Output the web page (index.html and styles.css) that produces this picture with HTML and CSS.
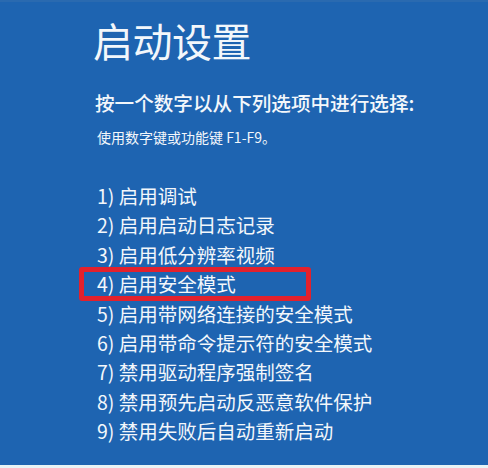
FILE: index.html
```html
<!DOCTYPE html>
<html lang="zh-CN">
<head>
<meta charset="utf-8">
<link rel="stylesheet" href="styles.css">
</head>
<body>
<div class="screen">
  <h1 class="title">启动设置</h1>
  <p class="lead">按一个数字以从下列选项中进行选择:</p>
  <p class="hint">使用数字键或功能键 F1-F9。</p>
  <ol class="options">
    <li>1) 启用调试</li>
    <li>2) 启用启动日志记录</li>
    <li>3) 启用低分辨率视频</li>
    <li class="selected">4) 启用安全模式<span class="mark"></span></li>
    <li>5) 启用带网络连接的安全模式</li>
    <li>6) 启用带命令提示符的安全模式</li>
    <li>7) 禁用驱动程序强制签名</li>
    <li>8) 禁用预先启动反恶意软件保护</li>
    <li>9) 禁用失败后自动重新启动</li>
  </ol>
</div>
</body>
</html>
```
FILE: styles.css
```css
html, body {
  margin: 0;
  padding: 0;
  background: #e8f4f6;
}
.screen {
  width: 488px;
  height: 465px;
  box-sizing: border-box;
  background: #1e64b1;
  border-top: 2px solid #2a6ab0;
  padding: 14px 0 0 93px;
  color: #f3f7fb;
  font-family: "Noto Sans CJK SC", "Noto Sans", sans-serif;
  overflow: hidden;
}
.title {
  margin: 0;
  font-size: 40px;
  line-height: 48px;
  font-weight: 400;
  letter-spacing: -0.5px;
}
.lead {
  margin: 26px 0 0 2px;
  font-size: 19.6px;
  line-height: 26px;
  font-weight: 500;
}
.hint {
  margin: 12px 0 0 4px;
  font-size: 14px;
  line-height: 18px;
}
.options {
  list-style: none;
  margin: 35px 0 0 4px;
  padding: 0;
  font-size: 19.5px;
  line-height: 29.4px;
}
.options li {
  position: relative;
}
.mark {
  position: absolute;
  left: -18px;
  top: -2px;
  width: 232px;
  height: 34px;
  box-sizing: border-box;
  border: 5px solid #e3212c;
  border-radius: 3px;
}
```
